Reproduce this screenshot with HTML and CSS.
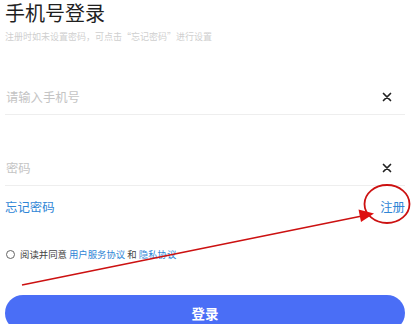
FILE: index.html
```html
<!DOCTYPE html>
<html lang="zh-CN">
<head>
<meta charset="utf-8">
<title>手机号登录</title>
<link rel="stylesheet" href="styles.css">
</head>
<body>
<div class="page">
  <h1 class="title">手机号登录</h1>
  <p class="subtitle">注册时如未设置密码，可点击“忘记密码”进行设置</p>

  <div class="field">
    <span class="placeholder">请输入手机号</span>
    <svg class="clear" width="10" height="10" viewBox="0 0 10 10"><path d="M1.5 1.5 L8.5 8.5 M8.5 1.5 L1.5 8.5" stroke="#222" stroke-width="1.7" stroke-linecap="round"/></svg>
  </div>
  <div class="field second">
    <span class="placeholder">密码</span>
    <svg class="clear" width="10" height="10" viewBox="0 0 10 10"><path d="M1.5 1.5 L8.5 8.5 M8.5 1.5 L1.5 8.5" stroke="#222" stroke-width="1.7" stroke-linecap="round"/></svg>
  </div>

  <div class="links">
    <span class="link">忘记密码</span>
    <span class="link">注册</span>
  </div>

  <div class="agree">
    <span class="radio"></span>
    <span>阅读并同意 <span class="blue">用户服务协议</span> 和 <span class="blue">隐私协议</span></span>
  </div>

  <div class="btn">登录</div>

  <svg class="annot" width="412" height="324" viewBox="0 0 412 324">
    <ellipse cx="387" cy="204" rx="22.5" ry="19" fill="none" stroke="#cc1111" stroke-width="1.8"/>
    <line x1="22" y1="285" x2="362" y2="216" stroke="#cc1111" stroke-width="1.6"/>
    <polygon points="374,213.5 358.5,209.5 361,222" fill="#dd1111"/>
  </svg>
</div>
</body>
</html>
```
FILE: styles.css
```css
html, body {
  margin: 0;
  padding: 0;
  background: #fff;
  overflow: hidden;
}
body {
  font-family: "Noto Sans CJK SC", "Noto Sans", sans-serif;
  color: #222;
}
.page {
  position: relative;
  width: 412px;
  height: 324px;
  padding: 1px 7px 0 5px;
  box-sizing: border-box;
}
.title {
  margin: 0;
  font-size: 20px;
  line-height: 24px;
  font-weight: 400;
  color: #1f1f1f;
}
.subtitle {
  margin: 4.5px 0 0;
  font-size: 9px;
  line-height: 14px;
  color: #cfcfcf;
}
.field {
  margin-top: 35.5px;
  height: 35px;
  border-bottom: 1px solid #eeeeee;
  display: flex;
  align-items: center;
  justify-content: space-between;
}
.field.second {
  margin-top: 35px;
}
.placeholder {
  font-size: 12.3px;
  color: #c4c4c4;
  padding-left: 1px;
}
.clear {
  margin-right: 13px;
}
.links {
  height: 42px;
  display: flex;
  align-items: center;
  justify-content: space-between;
}
.link {
  font-size: 12.4px;
  color: #2f86d6;
}
.agree {
  margin-top: 19px;
  height: 14px;
  display: flex;
  align-items: center;
  font-size: 9.4px;
  color: #444;
}
.radio {
  width: 7px;
  height: 7px;
  border: 1px solid #666;
  border-radius: 50%;
  margin: 0 5px 0 1px;
  flex: none;
}
.blue {
  color: #2f86d6;
}
.btn {
  margin-top: 34px;
  height: 36px;
  border-radius: 18px;
  background: #4a6ef6;
  color: #fff;
  font-size: 13.5px;
  font-weight: 700;
  display: flex;
  align-items: center;
  justify-content: center;
  width: 400px;
}
.annot {
  position: absolute;
  left: 0;
  top: 0;
  pointer-events: none;
}
```
